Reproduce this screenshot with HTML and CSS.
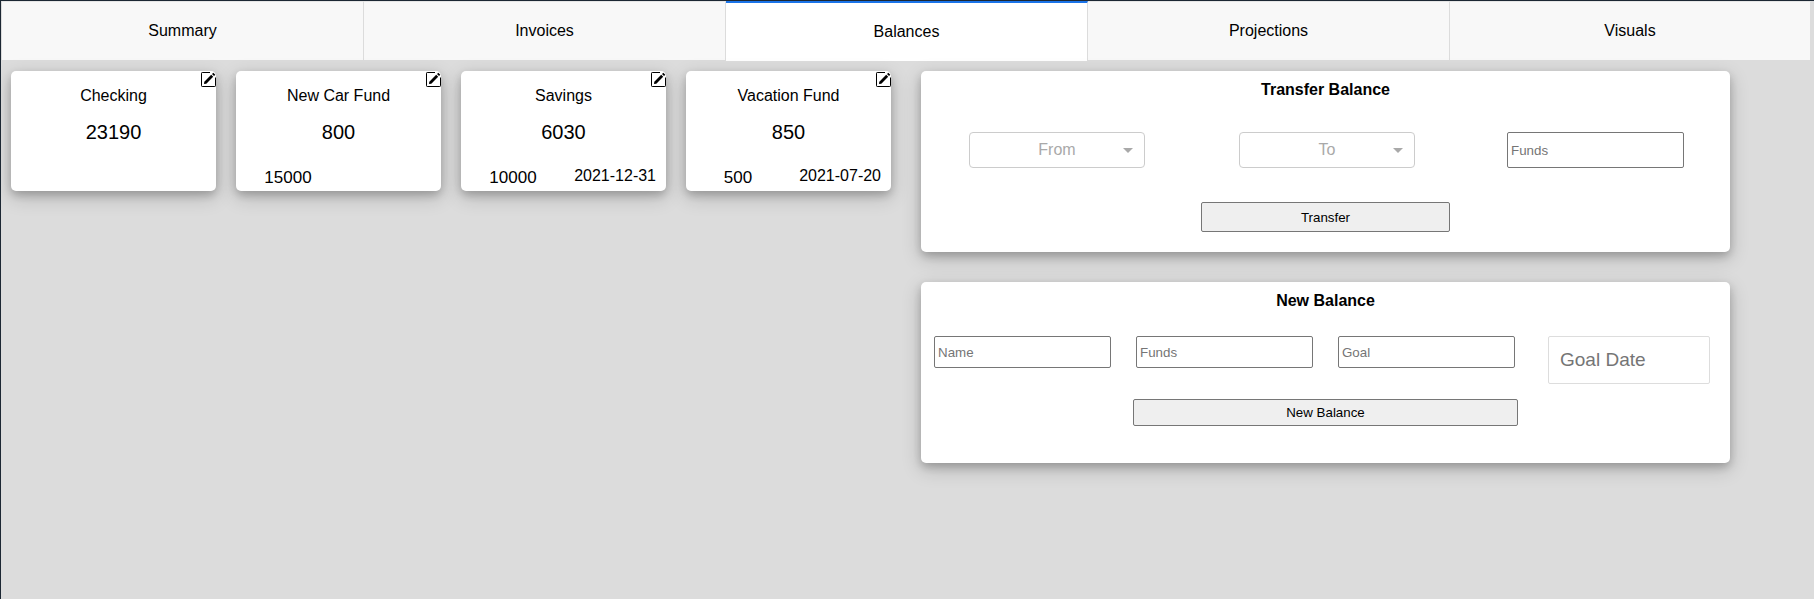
FILE: index.html
```html
<!DOCTYPE html>
<html lang="en">
<head>
<meta charset="utf-8">
<title>Balances</title>
<link rel="stylesheet" href="styles.css">
</head>
<body>
<svg class="defs" width="0" height="0" aria-hidden="true">
  <symbol id="edit" viewBox="0 0 15 15">
    <path d="M9 .5H1.2a.7.7 0 0 0-.7.7v12.6a.7.7 0 0 0 .7.7h12.6a.7.7 0 0 0 .7-.7V5.5" fill="none" stroke="#000" stroke-width="1"/>
    <path d="M3 12l.3-2.3 6.9-6.9 2 2-6.9 6.9zM11 2l1.3-1.3 2 2L13 4z" fill="#000"/>
  </symbol>
</svg>
<nav class="tabs">
  <div class="tab">Summary</div>
  <div class="tab">Invoices</div>
  <div class="tab active">Balances</div>
  <div class="tab">Projections</div>
  <div class="tab">Visuals</div>
</nav>
<main class="content">
  <section class="cards">
    <article class="card">
      <svg class="edit"><use href="#edit"/></svg>
      <div class="card-name">Checking</div>
      <div class="card-amount">23190</div>
      <div class="card-foot"><span class="goal"></span><span class="date"></span></div>
    </article>
    <article class="card">
      <svg class="edit"><use href="#edit"/></svg>
      <div class="card-name">New Car Fund</div>
      <div class="card-amount">800</div>
      <div class="card-foot"><span class="goal">15000</span><span class="date"></span></div>
    </article>
    <article class="card">
      <svg class="edit"><use href="#edit"/></svg>
      <div class="card-name">Savings</div>
      <div class="card-amount">6030</div>
      <div class="card-foot"><span class="goal">10000</span><span class="date">2021-12-31</span></div>
    </article>
    <article class="card">
      <svg class="edit"><use href="#edit"/></svg>
      <div class="card-name">Vacation Fund</div>
      <div class="card-amount">850</div>
      <div class="card-foot"><span class="goal">500</span><span class="date">2021-07-20</span></div>
    </article>
  </section>
  <section class="forms">
    <div class="panel panel-transfer">
      <h2 class="panel-title">Transfer Balance</h2>
      <div class="transfer-row">
        <div class="select">From<span class="caret"></span></div>
        <div class="select">To<span class="caret"></span></div>
        <input class="field field-funds" type="text" placeholder="Funds">
      </div>
      <button class="btn btn-transfer" type="button">Transfer</button>
    </div>
    <div class="panel panel-new">
      <h2 class="panel-title">New Balance</h2>
      <div class="new-row">
        <input class="field" type="text" placeholder="Name">
        <input class="field" type="text" placeholder="Funds">
        <input class="field" type="text" placeholder="Goal">
        <input class="date-field" type="text" placeholder="Goal Date">
      </div>
      <button class="btn btn-new" type="button">New Balance</button>
    </div>
  </section>
</main>
</body>
</html>
```
FILE: styles.css
```css
* { box-sizing: border-box; }
html, body { height: 100%; }
body {
  margin: 0;
  height: 599px;
  overflow: hidden;
  background: #dcdcdc;
  border-top: 1px solid #1c2733;
  border-left: 1px solid #1c2733;
  font-family: "Liberation Sans", Arial, sans-serif;
  color: #000;
}
.defs { position: absolute; }

.tabs {
  display: grid;
  grid-template-columns: repeat(4, 362fr) 361fr;
  height: 60px;
  margin: 0 3px 0 1px;
}
.tab {
  display: flex;
  align-items: center;
  justify-content: center;
  background: #f8f8f8;
  border-top: 1px solid #e6e6e6;
  border-right: 1px solid #dcdcdc;
  border-bottom: 1px solid #dcdcdc;
  font-size: 16px;
}
.tab.active {
  background: #fff;
  border-top: 2px solid #1a73e8;
  border-bottom: 0;
}

.content { display: flex; padding: 10px 0 0 10px; }
.cards { display: flex; gap: 20px; width: 910px; align-items: flex-start; }
.card {
  position: relative;
  width: 205px;
  height: 120px;
  background: #fff;
  border-radius: 5px;
  box-shadow: 0 4px 8px rgba(0, 0, 0, .2), 0 6px 20px rgba(0, 0, 0, .19);
  display: flex;
  flex-direction: column;
  text-align: center;
}
.edit { position: absolute; top: 1px; right: 0; width: 15px; height: 15px; }
.card-name { margin-top: 16px; font-size: 16px; line-height: 18px; }
.card-amount { margin-top: 16px; font-size: 20px; line-height: 23px; }
.card-foot { position: relative; margin-top: auto; height: 32px; line-height: 18px; }
.goal { position: absolute; left: 0; width: 104px; bottom: 4px; font-size: 17px; text-align: center; }
.date { position: absolute; right: 10px; bottom: 6px; font-size: 16px; }

.forms { display: flex; flex-direction: column; gap: 30px; width: 809px; }
.panel {
  background: #fff;
  border-radius: 5px;
  box-shadow: 0 4px 8px rgba(0, 0, 0, .2), 0 6px 20px rgba(0, 0, 0, .19);
  display: flex;
  flex-direction: column;
  align-items: center;
  height: 181px;
}
.panel-title { margin: 10px 0 0; font-size: 16px; line-height: 18px; font-weight: 700; }

.transfer-row { display: flex; align-self: stretch; padding: 33px 0 0 48px; gap: 94px; }
.select {
  position: relative;
  width: 176px;
  height: 36px;
  border: 1px solid #ccc;
  border-radius: 4px;
  display: flex;
  align-items: center;
  justify-content: center;
  font-size: 16px;
  color: #a9a9a9;
}
.caret {
  position: absolute;
  right: 11px;
  top: 15px;
  border-left: 5px solid transparent;
  border-right: 5px solid transparent;
  border-top: 5px solid #a9a9a9;
}
.field {
  width: 177px;
  margin: 0;
  padding: 1px 3px;
  border: 1px solid #767676;
  border-radius: 2px;
  background: #fff;
  font: 13.333px "Liberation Sans", Arial, sans-serif;
}
.field-funds { height: 36px; margin-left: -2px; }
.new-row { display: flex; align-self: stretch; align-items: flex-start; gap: 25px; padding: 26px 0 0 13px; }
.new-row .field { height: 32px; }
.date-field {
  width: 162px;
  height: 48px;
  margin-left: 8px;
  padding: 0 11px;
  border: 1px solid #ddd;
  border-radius: 2px;
  background: #fff;
  font: 19px "Liberation Sans", Arial, sans-serif;
}
.btn {
  padding: 0;
  background: #efefef;
  border: 1px solid #767676;
  border-radius: 2px;
  color: #000;
  font: 13.333px "Liberation Sans", Arial, sans-serif;
}
.btn-transfer { width: 249px; height: 30px; margin-top: 34px; }
.btn-new { width: 385px; height: 27px; margin-top: 15px; }
```
